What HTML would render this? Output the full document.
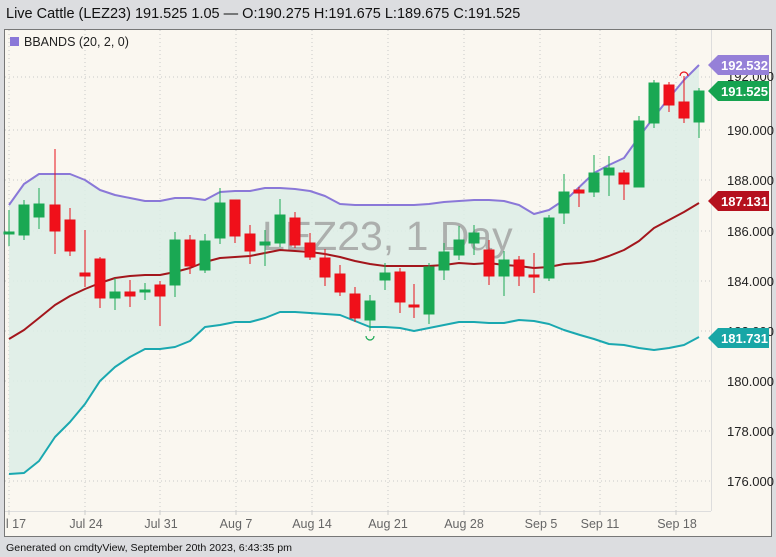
<!DOCTYPE html>
<html><head><meta charset="utf-8"><style>
html,body{margin:0;padding:0;width:776px;height:557px;background:#dcdde0;overflow:hidden;font-family:"Liberation Sans",sans-serif}
</style></head><body>
<svg width="776" height="557" xmlns="http://www.w3.org/2000/svg" style="position:absolute;left:0;top:0">
<text x="6" y="18" font-size="14.5" fill="#111" font-family="Liberation Sans">Live Cattle (LEZ23) 191.525 1.05 — O:190.275 H:191.675 L:189.675 C:191.525</text>
<rect x="4.5" y="29.5" width="767" height="507" fill="#faf7f0" stroke="#777"/>
<rect x="5" y="30" width="706" height="481" fill="#faf7f0"/>
<g stroke="#c8c8c8" stroke-dasharray="1,3">
<line x1="5" x2="711" y1="77" y2="77"/><line x1="5" x2="711" y1="130" y2="130"/><line x1="5" x2="711" y1="180" y2="180"/><line x1="5" x2="711" y1="231" y2="231"/><line x1="5" x2="711" y1="281" y2="281"/><line x1="5" x2="711" y1="331" y2="331"/><line x1="5" x2="711" y1="381" y2="381"/><line x1="5" x2="711" y1="431" y2="431"/><line x1="5" x2="711" y1="481" y2="481"/>
<line x1="9" x2="9" y1="30" y2="511"/><line x1="85" x2="85" y1="30" y2="511"/><line x1="160" x2="160" y1="30" y2="511"/><line x1="236" x2="236" y1="30" y2="511"/><line x1="312" x2="312" y1="30" y2="511"/><line x1="388" x2="388" y1="30" y2="511"/><line x1="464" x2="464" y1="30" y2="511"/><line x1="540" x2="540" y1="30" y2="511"/><line x1="600" x2="600" y1="30" y2="511"/><line x1="676" x2="676" y1="30" y2="511"/>
</g>
<line x1="711.5" x2="711.5" y1="30" y2="511" stroke="#ddd"/>
<line x1="5" x2="711" y1="511.5" y2="511.5" stroke="#ddd"/>
<g stroke="#ccc"><line x1="9" x2="9" y1="511" y2="515"/><line x1="85" x2="85" y1="511" y2="515"/><line x1="160" x2="160" y1="511" y2="515"/><line x1="236" x2="236" y1="511" y2="515"/><line x1="312" x2="312" y1="511" y2="515"/><line x1="388" x2="388" y1="511" y2="515"/><line x1="464" x2="464" y1="511" y2="515"/><line x1="540" x2="540" y1="511" y2="515"/><line x1="600" x2="600" y1="511" y2="515"/><line x1="676" x2="676" y1="511" y2="515"/></g>
<g font-size="12.5" fill="#666" text-anchor="middle" font-family="Liberation Sans">
<text x="16" y="528">l 17</text><text x="86" y="528">Jul 24</text><text x="161" y="528">Jul 31</text><text x="236" y="528">Aug 7</text><text x="312" y="528">Aug 14</text><text x="388" y="528">Aug 21</text><text x="464" y="528">Aug 28</text><text x="541" y="528">Sep 5</text><text x="600" y="528">Sep 11</text><text x="677" y="528">Sep 18</text>
</g>
<polygon fill="#dcede6" fill-opacity="0.85" points="9,205 24,184 39,174 55,174 70,174 85,180 100,190 115,195 130,198 145,201 160,201 175,198 190,198 205,200 220,192 235,191 250,191 265,188 280,188 295,189 310,191 325,196 340,204 355,205 370,205 385,205 400,205 414,205 429,204 444,202 459,201 474,200 489,200 504,201 519,205 534,214 549,210 570,196 594,173 609,165 624,158 639,137 654,117 669,98 684,80 699,65 699,337 684,345 669,348 654,350 639,348 624,345 609,344 594,339 580,335 564,330 549,324 534,321 519,320 504,323 489,323 474,322 459,322 444,325 429,328 414,331 400,328 385,327 370,327 355,321 340,315 325,314 310,313 295,312 280,312 265,318 250,322 235,322 220,325 205,327 190,341 175,347 160,349 145,349 130,357 115,367 100,381 85,404 70,422 55,437 39,461 24,473 9,474"/>
<text x="262" y="250" font-size="41" fill="#9a9a9a" fill-opacity="0.75" font-family="Liberation Sans">LEZ23, 1 Day</text>
<g fill="none" stroke-width="2" stroke-linejoin="round">
<polyline stroke="#8a78d8" points="9,205 24,184 39,174 55,174 70,174 85,180 100,190 115,195 130,198 145,201 160,201 175,198 190,198 205,200 220,192 235,191 250,191 265,188 280,188 295,189 310,191 325,196 340,204 355,205 370,205 385,205 400,205 414,205 429,204 444,202 459,201 474,200 489,200 504,201 519,205 534,214 549,210 570,196 594,173 609,165 624,158 639,137 654,117 669,98 684,80 699,65"/>
<polyline stroke="#a3161c" points="9,339 24,330 39,318 55,305 70,296 85,289 100,283 115,278 130,276 145,275 160,275 175,272 190,268 205,262 220,258 235,257 250,256 265,253 280,250 295,251 310,252 325,254 340,257 355,261 370,264 385,266 400,266 414,266 429,266 444,265 459,263 474,264 489,263 504,265 519,266 534,268 549,267 564,264 580,263 594,261 609,256 624,250 639,241 654,228 669,220 684,212 699,203"/>
<polyline stroke="#1aa8b0" points="9,474 24,473 39,461 55,437 70,422 85,404 100,381 115,367 130,357 145,349 160,349 175,347 190,341 205,327 220,325 235,322 250,322 265,318 280,312 295,312 310,313 325,314 340,315 355,321 370,327 385,327 400,328 414,331 429,328 444,325 459,322 474,322 489,323 504,323 519,320 534,321 549,324 564,330 580,335 594,339 609,344 624,345 639,348 654,350 669,348 684,345 699,337"/>
</g>
<path d="M366,336 a4,4 0 0 0 8,0" fill="none" stroke="#1aa853" stroke-width="1.2"/>
<path d="M680,76 a4,4 0 0 1 8,0" fill="none" stroke="#e8101a" stroke-width="1.2"/>
<g stroke="#1aa853" fill="#1aa853">
<line x1="9" x2="9" y1="210" y2="246"/><rect x="4" y="232" width="10" height="2"/>
<line x1="24" x2="24" y1="200" y2="240"/><rect x="19" y="205" width="10" height="30"/>
<line x1="39" x2="39" y1="188" y2="229"/><rect x="34" y="204" width="10" height="13"/>
<line x1="115" x2="115" y1="278" y2="310"/><rect x="110" y="292" width="10" height="6"/>
<line x1="145" x2="145" y1="283" y2="300"/><rect x="140" y="290" width="10" height="2"/>
<line x1="175" x2="175" y1="232" y2="297"/><rect x="170" y="240" width="10" height="45"/>
<line x1="205" x2="205" y1="234" y2="273"/><rect x="200" y="241" width="10" height="29"/>
<line x1="220" x2="220" y1="188" y2="244"/><rect x="215" y="203" width="10" height="35"/>
<line x1="265" x2="265" y1="230" y2="266"/><rect x="260" y="242" width="10" height="3"/>
<line x1="280" x2="280" y1="199" y2="247"/><rect x="275" y="215" width="10" height="28"/>
<line x1="370" x2="370" y1="295" y2="331"/><rect x="365" y="301" width="10" height="19"/>
<line x1="385" x2="385" y1="263" y2="290"/><rect x="380" y="273" width="10" height="7"/>
<line x1="429" x2="429" y1="263" y2="324"/><rect x="424" y="267" width="10" height="47"/>
<line x1="444" x2="444" y1="243" y2="280"/><rect x="439" y="252" width="10" height="18"/>
<line x1="459" x2="459" y1="226" y2="260"/><rect x="454" y="240" width="10" height="15"/>
<line x1="474" x2="474" y1="225" y2="255"/><rect x="469" y="233" width="10" height="10"/>
<line x1="504" x2="504" y1="251" y2="296"/><rect x="499" y="260" width="10" height="16"/>
<line x1="549" x2="549" y1="215" y2="281"/><rect x="544" y="218" width="10" height="60"/>
<line x1="564" x2="564" y1="174" y2="224"/><rect x="559" y="192" width="10" height="21"/>
<line x1="594" x2="594" y1="155" y2="197"/><rect x="589" y="173" width="10" height="19"/>
<line x1="609" x2="609" y1="156" y2="196"/><rect x="604" y="168" width="10" height="7"/>
<line x1="639" x2="639" y1="116" y2="187"/><rect x="634" y="121" width="10" height="66"/>
<line x1="654" x2="654" y1="80" y2="128"/><rect x="649" y="83" width="10" height="40"/>
<line x1="699" x2="699" y1="88" y2="138"/><rect x="694" y="91" width="10" height="31"/>
</g>
<g stroke="#e8101a" fill="#f0101a">
<line x1="55" x2="55" y1="149" y2="254"/><rect x="50" y="205" width="10" height="26"/>
<line x1="70" x2="70" y1="208" y2="256"/><rect x="65" y="220" width="10" height="31"/>
<line x1="85" x2="85" y1="230" y2="287"/><rect x="80" y="273" width="10" height="3"/>
<line x1="100" x2="100" y1="257" y2="308"/><rect x="95" y="259" width="10" height="39"/>
<line x1="130" x2="130" y1="280" y2="307"/><rect x="125" y="292" width="10" height="4"/>
<line x1="160" x2="160" y1="281" y2="326"/><rect x="155" y="285" width="10" height="11"/>
<line x1="190" x2="190" y1="235" y2="274"/><rect x="185" y="240" width="10" height="26"/>
<line x1="235" x2="235" y1="200" y2="243"/><rect x="230" y="200" width="10" height="36"/>
<line x1="250" x2="250" y1="225" y2="264"/><rect x="245" y="234" width="10" height="17"/>
<line x1="295" x2="295" y1="212" y2="248"/><rect x="290" y="218" width="10" height="27"/>
<line x1="310" x2="310" y1="233" y2="260"/><rect x="305" y="243" width="10" height="14"/>
<line x1="325" x2="325" y1="249" y2="286"/><rect x="320" y="258" width="10" height="19"/>
<line x1="340" x2="340" y1="265" y2="296"/><rect x="335" y="274" width="10" height="18"/>
<line x1="355" x2="355" y1="287" y2="322"/><rect x="350" y="294" width="10" height="24"/>
<line x1="400" x2="400" y1="268" y2="313"/><rect x="395" y="272" width="10" height="30"/>
<line x1="414" x2="414" y1="284" y2="318"/><rect x="409" y="305" width="10" height="2"/>
<line x1="489" x2="489" y1="240" y2="285"/><rect x="484" y="250" width="10" height="26"/>
<line x1="519" x2="519" y1="256" y2="286"/><rect x="514" y="260" width="10" height="16"/>
<line x1="534" x2="534" y1="253" y2="293"/><rect x="529" y="275" width="10" height="2"/>
<line x1="579" x2="579" y1="187" y2="207"/><rect x="574" y="190" width="10" height="3"/>
<line x1="624" x2="624" y1="170" y2="200"/><rect x="619" y="173" width="10" height="11"/>
<line x1="669" x2="669" y1="82" y2="112"/><rect x="664" y="85" width="10" height="20"/>
<line x1="684" x2="684" y1="76" y2="123"/><rect x="679" y="102" width="10" height="16"/>
</g>
<g font-size="13" fill="#222" font-family="Liberation Sans">
<text x="727" y="81">192.000</text><text x="727" y="135">190.000</text><text x="727" y="185">188.000</text><text x="727" y="236">186.000</text><text x="727" y="286">184.000</text><text x="727" y="336">182.000</text><text x="727" y="386">180.000</text><text x="727" y="436">178.000</text><text x="727" y="486">176.000</text>
</g>
<g font-size="13" font-weight="bold" fill="#fff" font-family="Liberation Sans">
<path d="M708,65 L718,55 L769,55 L769,75 L718,75 Z" fill="#9580d8"/><text x="721" y="70">192.532</text>
<path d="M708,91 L718,81 L769,81 L769,101 L718,101 Z" fill="#16a350"/><text x="721" y="96">191.525</text>
<path d="M708,201 L718,191 L769,191 L769,211 L718,211 Z" fill="#b5111e"/><text x="721" y="206">187.131</text>
<path d="M708,338 L718,328 L769,328 L769,348 L718,348 Z" fill="#18a6a6"/><text x="721" y="343">181.731</text>
</g>
<rect x="10" y="37" width="9" height="9" fill="#8a78d8"/>
<text x="24" y="46" font-size="12.5" fill="#222" font-family="Liberation Sans">BBANDS (20, 2, 0)</text>
<text x="6" y="551" font-size="10.5" fill="#111" font-family="Liberation Sans" textLength="286" lengthAdjust="spacingAndGlyphs">Generated on cmdtyView, September 20th 2023, 6:43:35 pm</text>
</svg>
</body></html>
